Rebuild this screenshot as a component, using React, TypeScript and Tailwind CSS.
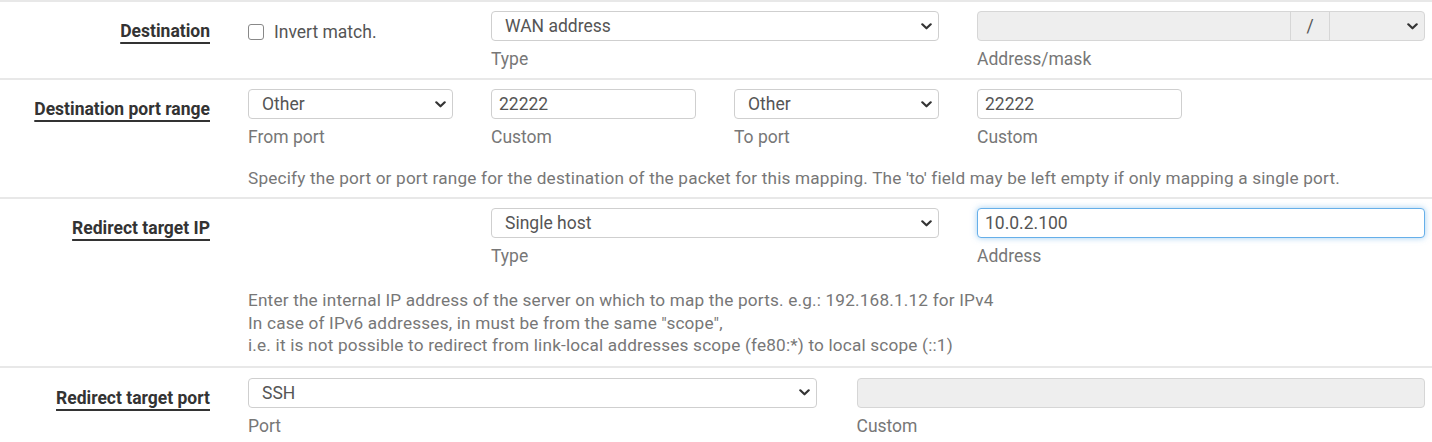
import React from 'react';

const Chevron = () => (
  <svg width="11" height="7" viewBox="0 0 11 7" className="shrink-0">
    <path d="M1.3 1.3 L5.5 5.3 L9.7 1.3" fill="none" stroke="#333" strokeWidth="2.2" strokeLinecap="round" strokeLinejoin="round" />
  </svg>
);

const Select = ({ value, disabled }: { value: string; disabled?: boolean }) => (
  <div
    className={`h-[30px] flex items-center justify-between pl-[13px] pr-[6px] border border-[#cfcfcf] rounded-[4px] text-[#555] ${
      disabled ? 'bg-[#eee]' : 'bg-white'
    }`}
  >
    <span className="leading-[22px]">{value}</span>
    <Chevron />
  </div>
);

const Input = ({ value, focus, disabled }: { value?: string; focus?: boolean; disabled?: boolean }) => (
  <div
    className={`h-[30px] flex items-center px-[7px] rounded-[4px] border text-[#555] leading-[22px] ${
      focus
        ? 'border-[#66afe9] shadow-[0_0_6px_rgba(102,175,233,0.6)] bg-white'
        : disabled
        ? 'border-[#d6d6d6] bg-[#eee]'
        : 'border-[#cfcfcf] bg-white'
    }`}
  >
    {value}
  </div>
);

const Sub = ({ children }: { children: React.ReactNode }) => (
  <div className="mt-[7px] leading-[22px] text-[#777]">{children}</div>
);

const Label = ({ children }: { children: React.ReactNode }) => (
  <div className="w-[210px] shrink-0 text-right pt-[9px] leading-[22px] whitespace-nowrap">
    <span className="font-bold text-[#333] underline underline-offset-[5px] decoration-[1.5px]">
      {children}
    </span>
  </div>
);

const Row = ({ label, children, pb, pt = 'pt-[9px]' }: { label: string; children: React.ReactNode; pb: string; pt?: string }) => (
  <div className={`flex border-t-2 border-[#e8e8e8] ${pt} ${pb}`}>
    <Label>{label}</Label>
    <div className="flex-1 ml-[38px] mr-[7px]">{children}</div>
  </div>
);

const grid5 = 'grid grid-cols-[205px_205px_205px_205px_205px] gap-x-[38px]';

export default function App() {
  return (
    <div className="w-[1432px] h-[442px] bg-white overflow-hidden text-[17.5px] font-['Roboto',sans-serif]">
      <Row label="Destination" pb="pb-[8px]">
        <div className={grid5}>
          <div className="flex items-start pt-[11px] text-[#555]">
            <span className="w-[16px] h-[16px] border border-[#888] rounded-[3px] mr-[10px] mt-[2px] bg-white shrink-0" />
            <span className="leading-[20px] whitespace-nowrap">Invert match.</span>
          </div>
          <div className="col-span-2">
            <Select value="WAN address" />
            <Sub>Type</Sub>
          </div>
          <div className="col-span-2">
            <div className="h-[30px] flex border border-[#d6d6d6] rounded-[4px] bg-[#eee]">
              <div className="flex-1" />
              <div className="w-[40px] border-x border-[#d6d6d6] flex items-center justify-center text-[#555]">/</div>
              <div className="w-[94px] flex items-center justify-end pr-[6px]">
                <Chevron />
              </div>
            </div>
            <Sub>Address/mask</Sub>
          </div>
        </div>
      </Row>

      <Row label="Destination port range" pb="pb-[8px]">
        <div className={grid5}>
          <div>
            <Select value="Other" />
            <Sub>From port</Sub>
          </div>
          <div>
            <Input value="22222" />
            <Sub>Custom</Sub>
          </div>
          <div>
            <Select value="Other" />
            <Sub>To port</Sub>
          </div>
          <div>
            <Input value="22222" />
            <Sub>Custom</Sub>
          </div>
        </div>
        <div className="mt-[19px] leading-[22px] text-[17.2px] tracking-[0.18px] text-[#777] whitespace-nowrap">
          Specify the port or port range for the destination of the packet for this mapping. The 'to' field may be left empty if only mapping a single port.
        </div>
      </Row>

      <Row label="Redirect target IP" pb="pb-[9px]">
        <div className={grid5}>
          <div />
          <div className="col-span-2">
            <Select value="Single host" />
            <Sub>Type</Sub>
          </div>
          <div className="col-span-2">
            <Input value="10.0.2.100" focus />
            <Sub>Address</Sub>
          </div>
        </div>
        <div className="mt-[22px] leading-[22.5px] text-[17.2px] tracking-[0.18px] text-[#777] whitespace-nowrap">
          <div>Enter the internal IP address of the server on which to map the ports. e.g.: 192.168.1.12 for IPv4</div>
          <div>In case of IPv6 addresses, in must be from the same "scope",</div>
          <div>i.e. it is not possible to redirect from link-local addresses scope (fe80:*) to local scope (::1)</div>
        </div>
      </Row>

      <Row label="Redirect target port" pb="pb-[8px]" pt="pt-[10px]">
        <div className="grid grid-cols-2 gap-x-[40px]">
          <div>
            <Select value="SSH" />
            <Sub>Port</Sub>
          </div>
          <div>
            <Input disabled />
            <Sub>Custom</Sub>
          </div>
        </div>
      </Row>
    </div>
  );
}
